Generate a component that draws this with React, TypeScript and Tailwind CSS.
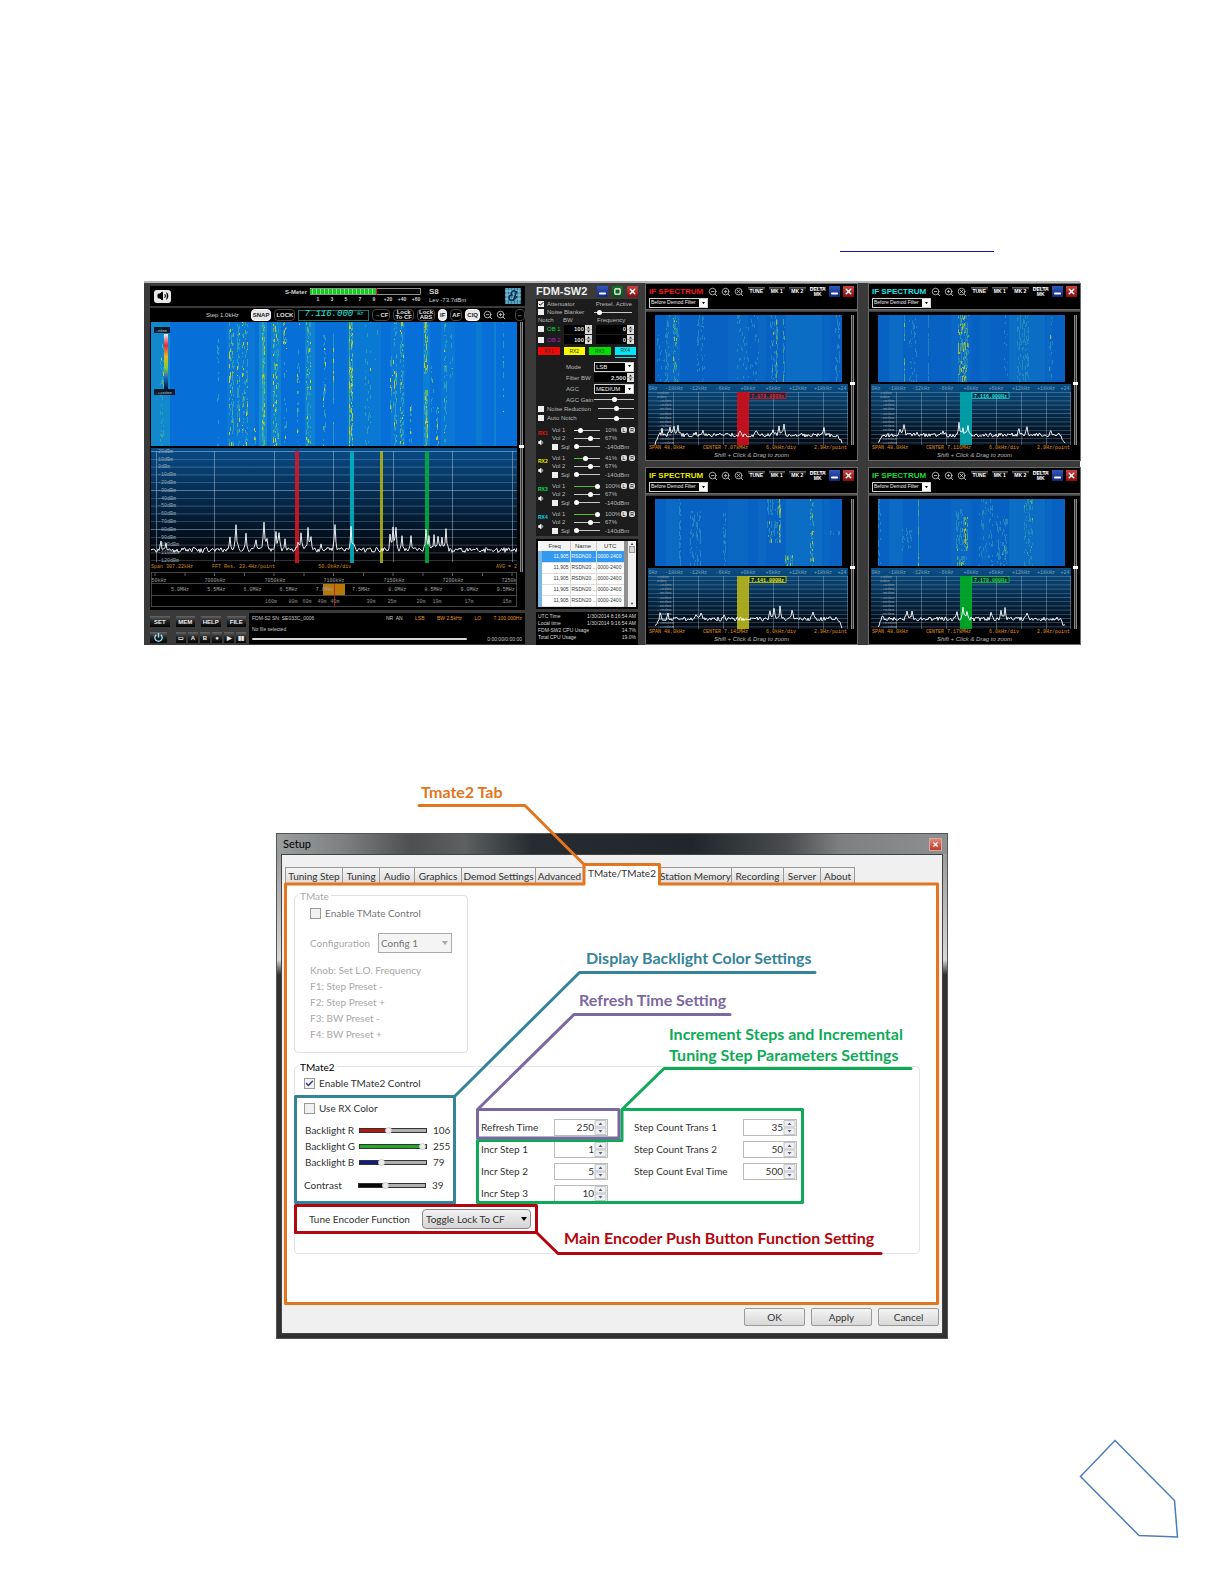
import { ReactNode } from "react"
import { Check, Minus, Search, Square, Volume1, Volume2, X, ZoomIn, ZoomOut } from "lucide-react"

type Streak = { x: number; w: number; d: number; hot?: number; from?: number; to?: number }
type Peak = [number, number]

// small seeded generator, keeps the traces stable between renders
const random = (seed: number) => () => {
  seed = (seed + 0x6d2b79f5) | 0
  let t = Math.imul(seed ^ (seed >>> 15), 1 | seed)
  t = (t + Math.imul(t ^ (t >>> 7), 61 | t)) ^ t
  return ((t ^ (t >>> 14)) >>> 0) / 4294967296
}

const streakPaths = (streaks: Streak[], height: number, seed: number) => {
  const next = random(seed)
  const paths = ["", "", ""]
  streaks.forEach(({ x, w, d, hot = 0.3, from = 0, to = height }) => {
    for (let dx = 0; dx < w; dx += 1) {
      const density = Math.min(1, d * (0.5 + next()))
      const heat = hot * (0.3 + next())
      for (let y = from; y < to; ) {
        const len = Math.min(to - y, 1 + Math.floor(next() * 4))
        if (next() < density) {
          const r = next()
          const tone = r < heat * 0.4 ? 2 : r < heat ? 1 : 0
          paths[tone] += `M${x + dx} ${y}h1v${len}h-1z`
        }
        y += len
      }
    }
  })
  return paths
}

const trace = (width: number, base: number, noise: number, peaks: Peak[], seed: number, from = 0, shoulder = 0) => {
  const next = random(seed)
  let d = ""
  for (let x = from; x <= width; x += 1) {
    let y = base + (next() - 0.5) * noise
    peaks.forEach(([px, h]) => {
      const dist = Math.abs(x - px)
      if (dist < 4) y -= h * Math.exp(-dist * 1.1) * (0.8 + next() * 0.2)
    })
    const edge = Math.min(x - from, width - x)
    if (edge < shoulder) y += (shoulder - edge) * 1.6
    d += `${d ? "L" : "M"}${x} ${y.toFixed(1)}`
  }
  return d
}

const mainStreaks: Streak[] = [
  { x: 9, w: 4, d: 0.25, hot: 0.15 },
  { x: 66, w: 2, d: 0.15, hot: 0 },
  { x: 78, w: 5, d: 0.35, hot: 0.5 },
  { x: 86, w: 3, d: 0.4, hot: 0.3 },
  { x: 91, w: 6, d: 0.3, hot: 0.4 },
  { x: 103, w: 2, d: 0.3, from: 106 },
  { x: 111, w: 3, d: 0.8, hot: 0.6 },
  { x: 122, w: 6, d: 0.4, hot: 0.5 },
  { x: 132, w: 4, d: 0.55, hot: 0.6, to: 22 },
  { x: 133, w: 3, d: 0.15, from: 22 },
  { x: 146, w: 3, d: 0.15 },
  { x: 155, w: 5, d: 0.4, hot: 0.4 },
  { x: 172, w: 3, d: 0.35, hot: 0.4 },
  { x: 182, w: 1, d: 2, hot: 0.4, from: 12, to: 82 },
  { x: 182, w: 1, d: 2, hot: 0.4, from: 100 },
  { x: 198, w: 4, d: 0.7, hot: 0.7 },
  { x: 214, w: 6, d: 0.12, hot: 0.1 },
  { x: 224, w: 3, d: 0.12, hot: 0.1, to: 40 },
  { x: 239, w: 4, d: 0.3, hot: 0.3, from: 34, to: 98 },
  { x: 243, w: 3, d: 0.35, hot: 0.4 },
  { x: 249, w: 4, d: 0.3, hot: 0.3 },
  { x: 257, w: 4, d: 0.2, hot: 0.3, from: 80 },
  { x: 273, w: 4, d: 0.65, hot: 0.6, to: 52 },
  { x: 273, w: 4, d: 0.8, hot: 0.8, from: 68 },
  { x: 280, w: 3, d: 0.2, from: 40, to: 90 },
  { x: 285, w: 3, d: 0.35, hot: 0.5, from: 84 },
  { x: 293, w: 3, d: 0.4, hot: 0.3 },
  { x: 299, w: 3, d: 0.15, to: 60 },
  { x: 352, w: 1, d: 0.4, hot: 0.3, to: 90 },
]

const mainPeaks: Peak[] = [
  [10, 10], [15, 8], [79, 16], [85, 28], [95, 18], [105, 12], [113, 32], [116, 14], [125, 22], [128, 20], [134, 12],
  [147, 10], [150, 18], [157, 26], [160, 12], [170, 8], [184, 28], [200, 24], [203, 8], [239, 14], [242, 26], [245, 24],
  [251, 18], [260, 14], [275, 22], [278, 16], [283, 16], [287, 14], [291, 14], [295, 20],
]

const bands = [
  { x: 144, w: 4, fill: "#e0141e" },
  { x: 199, w: 4, fill: "#00b8c8" },
  { x: 229, w: 3, fill: "#b8b814" },
  { x: 274, w: 4, fill: "#00b43c" },
]

const receivers = [
  { name: "RX1", color: "text-[#f01010]", vol: "10%", v: 20, fill: "#dddddd", vol2: "67%" },
  { name: "RX2", color: "text-[#e8e800]", vol: "41%", v: 41, fill: "#56c02b", vol2: "67%" },
  { name: "RX3", color: "text-[#00e040]", vol: "100%", v: 100, fill: "#56c02b", vol2: "67%" },
  { name: "RX4", color: "text-[#00d8e8]", vol: "100%", v: 100, fill: "#56c02b", vol2: "67%" },
]

const ifWindows = [
  {
    id: "rx1", title: "text-[#f01818]", band: "#c8101c", freq: "7.078.000Hz", center: "CENTER 7.078MHz",
    streaks: [
      { x: 2, w: 8, d: 0.15, hot: 0, from: 20 }, { x: 10, w: 5, d: 0.3, hot: 0.1 }, { x: 18, w: 6, d: 0.5, hot: 0.35 }, { x: 42, w: 8, d: 0.25, hot: 0.05 },
      { x: 82, w: 22, d: 0.1, hot: 0 }, { x: 115, w: 6, d: 0.2, hot: 0.1 }, { x: 121, w: 2, d: 0.8, hot: 0.4 }, { x: 128, w: 2, d: 0.5, hot: 0.3 }, { x: 180, w: 5, d: 0.25, hot: 0 },
    ],
    peaks: [[14, 6], [22, 8], [26, 9], [30, 10], [48, 4], [55, 4], [92, 5], [108, 6], [125, 8], [131, 12], [136, 10], [176, 7]] as Peak[],
  },
  {
    id: "rx4", title: "text-[#28e0e0]", band: "#00a0a8", freq: "7.116.000Hz", center: "CENTER 7.116MHz",
    streaks: [
      { x: 26, w: 1, d: 2, hot: 0.7, to: 26 }, { x: 26, w: 1, d: 2, hot: 0.7, from: 43 }, { x: 31, w: 8, d: 0.15, hot: 0 }, { x: 50, w: 1, d: 0.9, hot: 0 },
      { x: 80, w: 11, d: 0.6, hot: 0.5 }, { x: 126, w: 4, d: 0.2, hot: 0 }, { x: 139, w: 12, d: 0.3, hot: 0 }, { x: 171, w: 5, d: 0.15, hot: 0.1 },
    ],
    peaks: [[33, 14], [29, 6], [46, 5], [72, 4], [88, 14], [92, 8], [97, 9], [148, 6], [156, 9], [180, 6]] as Peak[],
  },
  {
    id: "rx2", title: "text-[#e8e800]", band: "#b0b01c", freq: "7.141.000Hz", center: "CENTER 7.141MHz",
    streaks: [
      { x: 24, w: 2, d: 0.5, hot: 0 }, { x: 35, w: 11, d: 0.25, hot: 0, from: 12 }, { x: 68, w: 3, d: 0.3, hot: 0, from: 14 }, { x: 112, w: 12, d: 0.35, hot: 0.05, to: 16 },
      { x: 112, w: 12, d: 0.4, hot: 0.1, from: 22, to: 44 }, { x: 124, w: 2, d: 0.8, hot: 0.7, to: 44 }, { x: 130, w: 8, d: 0.4, hot: 0.3, from: 56 },
      { x: 155, w: 4, d: 0.35, hot: 0.5 }, { x: 173, w: 12, d: 0.3, hot: 0, from: 32, to: 36 },
    ],
    peaks: [[12, 8], [20, 5], [48, 5], [53, 9], [76, 6], [122, 9], [126, 11], [132, 12], [144, 13], [165, 10]] as Peak[],
  },
  {
    id: "rx3", title: "text-[#20d838]", band: "#00a828", freq: "7.178.000Hz", center: "CENTER 7.178MHz",
    streaks: [
      { x: 0, w: 3, d: 0.4, hot: 0 }, { x: 24, w: 11, d: 0.3, hot: 0.05, from: 26, to: 52 }, { x: 40, w: 1, d: 0.9, hot: 0.4 }, { x: 78, w: 8, d: 0.4, hot: 0.1, from: 10, to: 52 },
      { x: 86, w: 4, d: 0.8, hot: 0.8, from: 18, to: 52 }, { x: 79, w: 10, d: 0.5, hot: 0.4, from: 57 }, { x: 101, w: 14, d: 0.2, hot: 0 }, { x: 118, w: 12, d: 0.25, hot: 0, from: 16 },
      { x: 124, w: 5, d: 0.5, hot: 0.6, from: 46, to: 56 }, { x: 146, w: 9, d: 0.3, hot: 0.1 },
    ],
    peaks: [[11, 7], [36, 9], [41, 10], [86, 7], [92, 12], [96, 8], [120, 6], [130, 9], [134, 12], [156, 8]] as Peak[],
  },
]

const tabs = [
  { name: "Tuning Step", w: "w-[58px]" },
  { name: "Tuning", w: "w-[37px]" },
  { name: "Audio", w: "w-[35px]" },
  { name: "Graphics", w: "w-[47px]" },
  { name: "Demod Settings", w: "w-[74px]" },
  { name: "Advanced", w: "w-[48px]" },
  { name: "TMate/TMate2", w: "w-[76px]" },
  { name: "Station Memory", w: "w-[72px]" },
  { name: "Recording", w: "w-[52px]" },
  { name: "Server", w: "w-[37px]" },
  { name: "About", w: "w-[34px]" },
]

const backlights = [
  { name: "Backlight R", value: 106, max: 255, color: "#b01c10" },
  { name: "Backlight G", value: 255, max: 255, color: "#28a828" },
  { name: "Backlight B", value: 79, max: 255, color: "#101c80" },
]

const fillTo = (color: string, rest: string, pct: number) => ({
  backgroundImage: `linear-gradient(to right, ${color} ${pct}%, ${rest} ${pct}%)`,
})

const Waterfall = ({ width, height, streaks, seed, haze, fill, soft = false }: { width: number; height: number; streaks: Streak[]; seed: number; haze: number[][]; fill: string; soft?: boolean }) => {
  const [cool, green, hot] = streakPaths(streaks, height, seed)
  return (
    <>
      <rect width={width} height={height} fill={fill} />
      {haze.map(([x, w, o]) => (
        <rect key={x} x={x} width={w} height={height} fill="#22a8c0" opacity={o} />
      ))}
      <path d={cool} fill="#38a8b8" opacity={soft ? 0.5 : 0.7} />
      <path d={green} fill="#74bc60" opacity={soft ? 0.7 : 0.85} />
      <path d={hot} fill="#c4cc28" opacity={soft ? 0.8 : 0.95} />
    </>
  )
}

const MiniCheck = ({ label, checked = false, color = "text-[#b8b8b8]" }: { label: string; checked?: boolean; color?: string }) => (
  <label className={`flex items-center gap-[3px] whitespace-nowrap ${color}`}>
    <span className="grid place-items-center">
      <input type="checkbox" defaultChecked={checked} className="col-start-1 row-start-1 size-[6px] appearance-none bg-[#eeeeee]" />
      {checked && <Check className="pointer-events-none col-start-1 row-start-1 size-[6px] text-black" strokeWidth={4} />}
    </span>
    {label}
  </label>
)

const MiniSlider = ({ label, value, fill = "#c8c8c8" }: { label: string; value: number; fill?: string }) => (
  <input
    type="range"
    aria-label={label}
    defaultValue={value}
    style={fillTo(fill, "#c8c8c8", value)}
    className="h-px w-full min-w-0 appearance-none [&::-webkit-slider-thumb]:size-[5px] [&::-webkit-slider-thumb]:appearance-none [&::-webkit-slider-thumb]:rounded-full [&::-webkit-slider-thumb]:bg-white"
  />
)

const MiniNumber = ({ label, value }: { label: string; value: string }) => (
  <span className="flex h-[9px] bg-black">
    <input aria-label={label} defaultValue={value} className="w-full min-w-0 bg-black pr-px text-right font-bold text-[#dddddd]" />
    <span className="flex w-[7px] shrink-0 bg-[#dcdcdc] text-[#222222]">
      <svg viewBox="0 0 7 9" className="h-full w-full">
        <path d="M2 3.5l1.500-2 1.500 2zM2 5.500l1.500 2 1.500-2z" fill="currentColor" />
        <path d="M0 4.500h7" stroke="#888888" strokeWidth="0.5" />
      </svg>
    </span>
  </span>
)

const MiniSelect = ({ label, value }: { label: string; value: string }) => (
  <span className="flex h-[10px] border border-[#d0d0d0] bg-black">
    <select aria-label={label} className="w-full min-w-0 appearance-none bg-black pl-px text-[#f0f0f0]">
      <option>{value}</option>
    </select>
    <span className="grid w-[8px] shrink-0 place-items-center bg-white">
      <svg viewBox="0 0 4 3" className="w-[3px]"><path d="M0 0h4L2 3z" fill="#000000" /></svg>
    </span>
  </span>
)

const Pill = ({ children, lit = false }: { children: ReactNode; lit?: boolean }) => (
  <button
    className={`grid h-[12px] place-items-center rounded-[4px] border px-px text-[6px] leading-[5px] font-bold ${lit ? "border-white bg-[#e8e8e8] text-[#222222]" : "border-[#444444] bg-black text-[#e0e0e0]"}`}
  >
    {children}
  </button>
)

const WindowButton = ({ kind }: { kind: "min" | "max" | "close" }) => (
  <button
    aria-label={kind}
    className={`grid size-[11px] place-items-center text-white ${kind === "close" ? "bg-gradient-to-b from-[#c84040] to-[#8c0808]" : kind === "max" ? "bg-gradient-to-b from-[#187028] to-[#085018]" : "bg-gradient-to-b from-[#3058c0] to-[#102878]"}`}
  >
    {kind === "close" && <X className="size-[9px]" strokeWidth={4} />}
    {kind === "max" && <Square className="size-[7px]" strokeWidth={4} />}
    {kind === "min" && <Minus className="size-[9px] translate-y-[2px]" strokeWidth={5} />}
  </button>
)

const KeyButton = ({ children, label }: { children: ReactNode; label?: string }) => (
  <button
    aria-label={label}
    className="grid h-[11px] w-full place-items-center bg-gradient-to-b from-[#666666] via-[#222222] to-[#050505] text-[6px] leading-none font-bold text-[#e8e8e8]"
  >
    {children}
  </button>
)

const ScrollRail = ({ thumb, length }: { thumb: string; length: string }) => (
  <div className={`relative flex justify-center bg-black ${length}`}>
    <div className="w-[3px] border-x border-[#888888] bg-[#333333]"></div>
    <div className={`absolute h-[3px] w-[5px] bg-white ${thumb}`}></div>
  </div>
)

const Receiver = () => (
  <div className="flex min-w-0 flex-col pt-[3px] pr-[3px]">
    <div className="flex h-[20px] items-center bg-black px-1 text-[6px] font-bold text-[#d0d0d0]">
      <button aria-label="Mute" className="grid h-[13px] w-[17px] place-items-center rounded-[3px] bg-[#e8e8e8] text-black">
        <Volume2 className="size-[12px]" fill="currentColor" />
      </button>
      <span className="ml-auto self-start pt-[2px]">S-Meter</span>
      <svg viewBox="0 0 115 18" className="ml-[3px] w-[115px]">
        <rect x="0.500" y="1.500" width="110" height="6" fill="#080808" stroke="#cccccc" strokeWidth="0.7" />
        <rect y="2" width="66" height="5" fill="#18c828" />
        {Array.from({ length: 16 }, (_, i) => (
          <rect key={i} x={i * 4 + 2} y="2" width="1" height="5" fill="#70f070" />
        ))}
        <rect x="66" y="1" width="1" height="7" fill="#e02020" />
        {["1", "3", "5", "7", "9", "+20", "+40", "+60"].map((n, i) => (
          <text key={n} x={8 + i * 14} y="14" textAnchor="middle" fontSize="5" fill="#d0d0d0">{n}</text>
        ))}
      </svg>
      <div className="ml-1 w-[76px] leading-[8px]">
        <p className="text-[8px]">S8</p>
        <p className="font-normal">Lev -73.7dBm</p>
      </div>
      <svg viewBox="0 0 16 16" className="size-[16px]">
        <rect width="16" height="16" fill="#2c7ca0" />
        <path d="M2 0v16M5 0v16M8 0v16M11 0v16M14 0v16M0 3h16M0 7h16M0 11h16" stroke="#a0d8e8" strokeWidth="0.8" />
        <path d="M11 4c-3-3-6 1-4 3-4 0-4 6 0 5 2 0 4-2 5-4M12 3l-4 10" fill="none" stroke="#082848" strokeWidth="1.400" />
      </svg>
    </div>
    <div className="mt-[2px] flex h-[14px] items-center justify-end gap-[3px] bg-black text-[6px] text-[#d0d0d0]">
      <span className="mr-[9px]">Step 1.0kHz</span>
      <Pill lit>SNAP</Pill>
      <Pill>LOCK</Pill>
      <div className="flex h-[11px] w-[71px] items-center justify-center gap-1 border border-[#107878] font-mono text-[9px] text-[#28e8d8] italic">
        7.116.000<span className="text-[5px]">Hz</span>
      </div>
      <Pill>→CF</Pill>
      <Pill>Lock<br />To CF</Pill>
      <Pill>Lock<br />ABS</Pill>
      <Pill lit>IF</Pill>
      <Pill>AF</Pill>
      <Pill lit>CIQ</Pill>
      <button aria-label="Zoom out"><ZoomOut className="size-[10px]" /></button>
      <button aria-label="Zoom in"><ZoomIn className="size-[10px]" /></button>
      <span className="w-[3px]"></span>
      <Pill>←</Pill>
    </div>
    <div className="grid grid-cols-[minmax(0,1fr)_8px] bg-black pl-px">
      <div>
        <svg viewBox="0 0 366 126" className="block w-full">
          <Waterfall
            width={366} height={124} streaks={mainStreaks} seed={7} fill="#0670d8"
            haze={[[0, 19, 0.45], [76, 28, 0.15], [108, 8, 0.5], [120, 10, 0.3], [154, 10, 0.3], [196, 34, 0.18], [240, 14, 0.15], [272, 7, 0.25], [290, 14, 0.15], [325, 6, 0.2], [343, 2, 0.3]]}
          />
          <rect x="13" y="12" width="4" height="56" fill="url(#scale)" />
          <rect x="3" y="5" width="16" height="6" fill="#061828" />
          <rect x="3" y="67" width="21" height="6" fill="#061828" />
          <g fontSize="4" fill="#a0b8c8" className="font-mono">
            <text x="4" y="9.500">-0dBm</text>
            <text x="4" y="71.500">-140dBm</text>
          </g>
          <defs>
            <linearGradient id="scale" x1="0" y1="0" x2="0" y2="1">
              <stop offset="0" stopColor="#f0f0f0" /><stop offset="0.2" stopColor="#e02848" /><stop offset="0.4" stopColor="#e8b820" />
              <stop offset="0.6" stopColor="#88c840" /><stop offset="0.8" stopColor="#1060c0" /><stop offset="1" stopColor="#04102c" />
            </linearGradient>
          </defs>
        </svg>
        <svg viewBox="0 0 366 115" className="block w-full overflow-visible">
          <defs>
            <linearGradient id="depth" x1="0" y1="0" x2="0" y2="1">
              <stop offset="0" stopColor="#084c88" /><stop offset="0.85" stopColor="#020a14" /><stop offset="1" stopColor="#000000" />
            </linearGradient>
          </defs>
          <rect width="366" height="115" fill="url(#depth)" />
          {Array.from({ length: 15 }, (_, i) => (
            <g key={i}>
              <path d={`M0 ${3.5 + i * 7.8}H366`} stroke="#b8c8d8" strokeWidth="0.6" opacity={i % 5 === 0 ? 0.8 : 0.5} />
              <text x="7" y={4.8 + i * 7.8} fontSize="5" fill="#90a8b8" className="font-mono">{20 - i * 10}dBm</text>
            </g>
          ))}
          {[5, 63, 123, 182, 242, 301, 361].map((x) => (
            <path key={x} d={`M${x}.5 3V114`} stroke="#b8c8d8" strokeWidth="0.8" opacity="0.6" />
          ))}
          {bands.map((b) => (
            <rect key={b.x} x={b.x} y="3" width={b.w} height="112" fill={b.fill} opacity="0.85" />
          ))}
          <path d={trace(366, 102, 5, mainPeaks, 21)} fill="none" stroke="#ffffff" strokeWidth="0.9" />
        </svg>
        <div className="flex h-[8px] items-center font-mono text-[5px] leading-none text-[#d08c20]">
          <span className="w-1/6">Span 307.22kHz</span>
          <span className="w-[29%]">FFT Res. 23.4Hz/point</span>
          <span className="grow">50.0kHz/div</span>
          <span>AVG = 2</span>
        </div>
        <svg viewBox="0 0 366 39" className="block w-full font-mono">
          <path d="M0 1.500h366M0 12.500h366M0 24.500h366M0 35.500h366M0.500 1v35M365.500 1v35" stroke="#606060" strokeWidth="0.7" />
          <rect x="172" y="13" width="22" height="11" fill="#b87808" />
          {["50kHz", "7000kHz", "7050kHz", "7100kHz", "7150kHz", "7200kHz", "7250k"].map((t, i) => (
            <g key={t}>
              <text x={[8, 64, 124, 183, 243, 302, 358][i]} y="11" textAnchor="middle" fontSize="5" fill="#a0a0a0">{t}</text>
              <path d={`M${4 + i * 59.5} 2v3M${34 + i * 59.5} 2v3`} stroke="#888888" strokeWidth="0.7" />
            </g>
          ))}
          {["5.0", "5.5", "6.0", "6.5", "7.0", "7.5", "8.0", "8.5", "9.0", "9.5"].map((t, i) => (
            <text key={t} x={29 + i * 36.2} y="20" textAnchor="middle" fontSize="5" fill="#a0a0a0">{t}MHz</text>
          ))}
          {["160m", "80m", "60m", "49m", "40m", "30m", "25m", "20m", "19m", "17m", "15m"].map((t, i) => (
            <text key={t} x={[120, 142, 156, 171, 184, 220, 241, 270, 286, 318, 356][i]} y="32" textAnchor="middle" fontSize="5" fill="#909090">{t}</text>
          ))}
          <path d="M183.500 13v23" stroke="#c02010" strokeWidth="0.8" />
        </svg>
      </div>
      <ScrollRail thumb="top-[123px]" length="h-[250px]" />
    </div>
    <div className="mt-[3px] grid grid-cols-[96px_minmax(0,1fr)] gap-[3px]">
      <div className="pt-[3px]">
        <div className="grid grid-cols-4 gap-[6px]">
          <KeyButton>SET</KeyButton>
          <KeyButton>MEM</KeyButton>
          <KeyButton>HELP</KeyButton>
          <KeyButton>FILE</KeyButton>
        </div>
        <div className="mt-[5px] grid grid-cols-[17px_minmax(0,1fr)] gap-[9px]">
          <KeyButton label="Power">
            <svg viewBox="0 0 12 12" className="size-[11px]" fill="none" stroke="#90e0f8" strokeWidth="1.500">
              <path d="M3.500 3a4 4 0 105 0M6 1v5" />
            </svg>
          </KeyButton>
          <div className="grid grid-cols-6 gap-[2px]">
            <KeyButton label="Open">▭</KeyButton>
            <KeyButton>A</KeyButton>
            <KeyButton>B</KeyButton>
            <KeyButton label="Record">●</KeyButton>
            <KeyButton label="Play">▶</KeyButton>
            <KeyButton label="Pause">▮▮</KeyButton>
          </div>
        </div>
      </div>
      <div className="flex h-[31px] flex-col justify-between bg-black px-[3px] py-px text-[5px] leading-[8px] text-[#c8c8c8]">
        <div className="flex justify-between">
          <span className="w-[45%]">FDM-S2 SN: SE033C_0006</span>
          <span>NR&nbsp; AN</span>
          <span className="text-[#e09820]">LSB</span>
          <span className="text-[#e09820]">BW 2.5kHz</span>
          <span className="text-[#e09820]">LO</span>
          <span className="text-[#e09820]">7.100,000Hz</span>
        </div>
        <p>No file selected</p>
        <div className="flex items-center gap-5">
          <div className="h-[2px] grow rounded bg-[#d8d8d8]"></div>
          <span>0:00:00/0:00:00</span>
        </div>
      </div>
    </div>
  </div>
)

const ControlPanel = () => (
  <div className="flex min-w-0 flex-col text-[6px] leading-none text-[#b8b8b8]">
    <div className="flex h-[16px] items-center gap-[4px]">
      <h2 className="grow text-[11px] font-bold text-[#f0f0f0]">FDM-SW2</h2>
      <WindowButton kind="min" />
      <WindowButton kind="max" />
      <WindowButton kind="close" />
    </div>
    <div className="h-[237px] bg-[#1c1c1c] px-[2px] pt-px">
      <div className="flex h-[8px] items-center justify-between pr-1">
        <MiniCheck label="Attenuator" checked />
        <span>Presel. Active</span>
      </div>
      <div className="flex h-[8px] items-center justify-between pr-1">
        <MiniCheck label="Noise Blanker" />
        <div className="flex w-[38px]"><MiniSlider label="Preselector" value={10} /></div>
      </div>
      <div className="flex h-[8px] items-center">
        <span className="w-[25px]">Notch</span>
        <span className="w-[34px]">BW</span>
        <span>Frequency</span>
      </div>
      <div className="grid h-[10px] grid-cols-[22px_28px_1fr] items-center gap-x-[4px] pr-[2px]">
        <MiniCheck label="OB 1" color="text-[#00d840]" />
        <MiniNumber label="Notch 1 bandwidth" value="100" />
        <MiniNumber label="Notch 1 frequency" value="0" />
      </div>
      <div className="grid h-[11px] grid-cols-[22px_28px_1fr] items-center gap-x-[4px] pr-[2px]">
        <MiniCheck label="OB 2" color="text-[#b820c0]" />
        <MiniNumber label="Notch 2 bandwidth" value="100" />
        <MiniNumber label="Notch 2 frequency" value="0" />
      </div>
      <div className="mt-[2px] grid h-[11px] grid-cols-4 gap-[4px] text-[5px] text-[#333333]">
        <button className="h-[8px] bg-[#f00808]">RX1</button>
        <button className="h-[8px] bg-[#f8f800]">RX2</button>
        <button className="h-[8px] bg-[#00e000]">RX3</button>
        <button className="flex h-[11px] flex-col justify-between">
          <span className="h-[8px] w-full bg-[#00e8f8] pt-px">RX4</span>
          <span className="h-px w-full bg-[#00e8f8]"></span>
        </button>
      </div>
      <div className="mt-[3px] grid h-[43px] grid-cols-[56px_1fr] grid-rows-[11px_11px_12px_9px] items-center pr-[2px]">
        <span className="pl-[28px]">Mode</span>
        <MiniSelect label="Mode" value="LSB" />
        <span className="pl-[28px]">Filter BW</span>
        <MiniNumber label="Filter bandwidth" value="2,500" />
        <span className="pl-[28px]">AGC</span>
        <MiniSelect label="AGC" value="MEDIUM" />
        <span className="pl-[28px]">AGC Gain</span>
        <MiniSlider label="AGC gain" value={50} />
      </div>
      <div className="grid h-[19px] grid-cols-[60px_1fr] items-center pr-[2px]">
        <MiniCheck label="Noise Reduction" />
        <MiniSlider label="Noise reduction" value={50} />
        <MiniCheck label="Auto Notch" />
        <MiniSlider label="Auto notch" value={50} />
      </div>
      {receivers.map((r) => (
        <div key={r.name} className="mt-[3px] grid h-[25px] grid-cols-[12px_20px_26px_1fr] grid-rows-[8px_8px_9px] items-center gap-x-[2px]">
          <div className={`row-span-3 ${r.color}`}>
            <p className="text-[5px] font-bold">{r.name}</p>
            <Volume1 className="mt-[3px] size-[7px] text-white" fill="currentColor" />
          </div>
          <span>Vol 1</span>
          <MiniSlider label={`${r.name} volume 1`} value={r.v} fill={r.fill} />
          <div className="flex items-center justify-between pr-px pl-[3px]">
            <span>{r.vol}</span>
            <span className="flex gap-[2px] text-[5px] text-black">
              <button className="size-[6px] rounded-[2px] bg-[#d8d8d8]">L</button>
              <button className="size-[6px] rounded-[2px] bg-[#d8d8d8]">R</button>
            </span>
          </div>
          <span>Vol 2</span>
          <MiniSlider label={`${r.name} volume 2`} value={66} />
          <span className="pl-[3px]">{r.vol2}</span>
          <MiniCheck label="Sql" />
          <MiniSlider label={`${r.name} squelch`} value={2} />
          <span className="pl-[3px]">-140dBm</span>
        </div>
      ))}
    </div>
    <div className="mt-[3px] flex h-[70px] items-start bg-black p-[2px]">
      <table className="h-[66px] w-full table-fixed border-collapse bg-white text-[5px] text-[#333333]">
        <thead>
          <tr className="h-[10px] bg-[#f4f4f4] text-[6px]">
            <th className="w-[30px] border-r border-[#cccccc] font-normal">Freq</th>
            <th className="border-r border-[#cccccc] font-normal">Name</th>
            <th className="w-[28px] font-normal">UTC</th>
          </tr>
        </thead>
        <tbody>
          {[0, 1, 2, 3, 4].map((n) => (
            <tr key={n} className={`h-[11px] ${n === 0 ? "bg-[#3399f0] text-white" : ""}`}>
              <td className="border-r border-b border-l-4 border-[#dddddd] border-l-[#78b8e0] pr-px text-right">11,905</td>
              <td className="border-r border-b border-[#dddddd] pl-px whitespace-nowrap">RSDN20 ...</td>
              <td className="border-b border-[#dddddd] pl-px whitespace-nowrap">0000-2400</td>
            </tr>
          ))}
        </tbody>
      </table>
      <div className="h-[66px] w-[4px] shrink-0 bg-[#909090]"></div>
      <div className="flex h-[66px] w-[8px] shrink-0 flex-col items-center justify-between bg-[#f0f0f0] py-px text-[4px] text-[#333333]">
        <span>▲</span>
        <span className="mb-auto h-[7px] w-[6px] border border-[#999999] bg-[#d8d8d8]"></span>
        <span>▼</span>
      </div>
    </div>
    <div className="mt-[3px] grow bg-black px-[2px] py-px text-[5px] leading-[7px] text-[#d8d8d8]">
      <p className="flex justify-between"><span>UTC Time</span><span>1/30/2014 8:16:54 AM</span></p>
      <p className="flex justify-between"><span>Local time</span><span>1/30/2014 9:16:54 AM</span></p>
      <p className="flex justify-between"><span>FDM-SW2 CPU Usage</span><span>14.7%</span></p>
      <p className="flex justify-between"><span>Total CPU Usage</span><span>19.0%</span></p>
    </div>
  </div>
)

const SpectrumWindow = ({ win, seed }: { win: (typeof ifWindows)[number]; seed: number }) => (
  <section className="flex min-w-0 flex-col bg-black outline outline-[#6a6a6a]">
    <div className="h-[25px] px-[3px] pt-px">
      <div className="flex h-[13px] items-center gap-[3px] text-[#c8c8c8]">
        <h3 className={`w-[56px] text-[8px] font-bold whitespace-nowrap ${win.title}`}>IF SPECTRUM</h3>
        <button aria-label="Zoom out"><ZoomOut className="size-[10px]" /></button>
        <button aria-label="Zoom in"><ZoomIn className="size-[10px]" /></button>
        <button aria-label="Reset zoom" className="relative">
          <Search className="size-[10px]" />
          <X className="absolute top-[2px] left-[2px] size-[5px]" strokeWidth={4} />
        </button>
        <div className="ml-auto grid w-[78px] shrink-0 grid-cols-4 gap-[4px]">
          {["TUNE", "MK 1", "MK 2", "DELTA MK"].map((name) => (
            <button
              key={name}
              className="grid h-[10px] place-items-center bg-gradient-to-b from-[#777777] to-[#000000] to-40% text-[5px] leading-[5px] font-bold text-white"
            >
              {name}
            </button>
          ))}
        </div>
        <WindowButton kind="min" />
        <WindowButton kind="close" />
      </div>
      <div className="w-[59px] text-[5px]">
        <MiniSelect label="Filter stage" value="Before Demod Filter" />
      </div>
    </div>
    <div className="h-[3px] bg-gradient-to-b from-[#777777] to-[#333333]"></div>
    <div className="grid grid-cols-[minmax(0,1fr)_9px] pt-[3px] pl-[2px]">
      <svg viewBox="0 0 200 130" className="block w-full font-mono">
        <g transform="translate(7 0)">
          <Waterfall soft width={187} height={67} streaks={win.streaks} seed={seed} fill="#0862c4" haze={[[11, 14, 0.12], [73, 20, 0.08], [103, 8, 0.08], [131, 36, 0.16], [169, 5, 0.08]]} />
        </g>
        <linearGradient id={`depth-${win.id}`} x1="0" y1="0" x2="0" y2="1">
          <stop offset="0" stopColor="#0a5088" /><stop offset="0.9" stopColor="#020c18" />
        </linearGradient>
        <rect y="69" width="200" height="61" fill={`url(#depth-${win.id})`} />
        {["0Hz", "-18kHz", "-12kHz", "-6kHz", "+0kHz", "+6kHz", "+12kHz", "+18kHz", "+24"].map((t, i) => (
          <text key={t} x={[5, 26, 50, 75, 100, 125, 150, 175, 194][i]} y="75" textAnchor="middle" fontSize="5" fill="#78a0b8">{t}</text>
        ))}
        {Array.from({ length: 13 }, (_, i) => (
          <g key={i}>
            <path d={`M0 ${77.5 + i * 4.2}H200`} stroke="#b0c8d8" strokeWidth="0.5" opacity="0.6" />
            <text x="9" y={78.5 + i * 4.2} fontSize="4" fill="#8098a8">{10 - i * 10}dBm</text>
          </g>
        ))}
        {[25, 50, 75, 100, 125, 150, 175, 199].map((x) => (
          <path key={x} d={`M${x}.5 77V130`} stroke="#b0c8d8" strokeWidth="0.7" opacity="0.5" />
        ))}
        <rect x="89" y="77" width="12" height="53" fill={win.band} opacity="0.95" />
        <g className={win.title}>
          <rect x="101" y="77.5" width="37" height="6" fill="#082030" fillOpacity="0.6" stroke="currentColor" strokeWidth="0.7" />
          <text x="103" y="82.500" fontSize="5" fontWeight="bold" fill="currentColor">{win.freq}</text>
        </g>
        <path d={trace(194, 120, 4, win.peaks, seed + 3, 7, 5)} fill="none" stroke="#ffffff" strokeWidth="0.9" />
      </svg>
      <ScrollRail thumb="top-[67px]" length="h-full" />
    </div>
    <div className="flex h-[6px] items-center justify-between pr-[10px] pl-[3px] font-mono text-[5px] leading-none whitespace-nowrap text-[#e09018]">
      <span>SPAN 48.0kHz</span>
      <span>{win.center}</span>
      <span>6.0kHz/div</span>
      <span>2.9Hz/point</span>
    </div>
    <p className="h-[9px] text-center text-[6px] leading-[9px] text-[#b8b8b8] italic">Shift + Click &amp; Drag to zoom</p>
  </section>
)

const SetupCheck = ({ label, checked = false, disabled = false }: { label: string; checked?: boolean; disabled?: boolean }) => (
  <label className="flex items-center gap-1">
    <span className="grid place-items-center">
      <input
        type="checkbox"
        defaultChecked={checked}
        disabled={disabled}
        className="col-start-1 row-start-1 size-[11px] appearance-none border border-[#999999] bg-[#f2f2f2]"
      />
      {checked && <Check className="pointer-events-none col-start-1 row-start-1 size-[9px] text-[#33448c]" strokeWidth={4} />}
    </span>
    {label}
  </label>
)

const SetupSlider = ({ name, value, max, color }: { name: string; value: number; max: number; color: string }) => (
  <label className="flex h-4 items-center">
    <span className="w-[54px]">{name}</span>
    <input
      type="range"
      max={max}
      defaultValue={value}
      style={fillTo(color, "#b0b0b0", (value / max) * 100)}
      className="h-[5px] w-[68px] appearance-none border border-[#333333] [&::-webkit-slider-thumb]:size-[7px] [&::-webkit-slider-thumb]:appearance-none [&::-webkit-slider-thumb]:rounded-full [&::-webkit-slider-thumb]:border [&::-webkit-slider-thumb]:border-[#cccccc] [&::-webkit-slider-thumb]:bg-[#eeeeee]"
    />
    <output className="ml-[6px]">{value}</output>
  </label>
)

const SetupNumber = ({ name, value, label }: { name: string; value: number; label: string }) => (
  <label className="flex h-[22px] items-center">
    <span className={label}>{name}</span>
    <span className="flex h-[17px] w-[54px] items-center border border-[#bbbbbb] bg-white">
      <input type="number" defaultValue={value} className="w-full min-w-0 [appearance:textfield] text-right [&::-webkit-inner-spin-button]:appearance-none" />
      <svg viewBox="0 0 13 15" className="h-[15px] w-[13px] shrink-0">
        <path d="M1 .5h11v6.500H1zM1 8h11v6.500H1z" fill="#f0f0f0" stroke="#c4c4c4" />
        <path d="M4.500 5l2-2.500 2 2.500zM4.500 10l2 2.500 2-2.500z" fill="#5060a0" />
      </svg>
    </span>
  </label>
)

const SetupDialog = () => (
  <div className="border border-[#555555] bg-gradient-to-b from-[#909090] via-[#d8d8d8] via-25% to-[#303030] to-28% px-1 pb-1 font-[Lato,sans-serif] text-[10px] leading-4 text-[#333333]">
    <div className="-mx-1 flex h-[20px] items-center justify-between bg-[linear-gradient(to_right,#9a9e9e_0%,#7c8080_10%,#4c5050_20%,#5c6060_28%,#262c30_38%,#20262a_62%,#484c4e_76%,#7c8080_84%,#8c9090_100%)] pr-[5px] pl-[6px]">
      <h2 className="text-[11px] text-black">Setup</h2>
      <button aria-label="Close" className="grid h-[13px] w-[13px] place-items-center border border-[#dba8a0] bg-gradient-to-b from-[#e08878] to-[#c03828] text-white">
        <X className="size-[7px]" strokeWidth={4} />
      </button>
    </div>
    <div className="border border-[#444444] bg-[#f0f0f0] pb-[7px]">
      <div className="flex items-end px-[3px] pt-[9px]">
        {tabs.map((t) => (
          <button
            key={t.name}
            className={`whitespace-nowrap ${t.w} ${t.name === "TMate/TMate2" ? "h-[20px] bg-white pb-[2px]" : "h-[17px] border-t border-r border-[#999999] bg-gradient-to-b from-[#f4f4f4] to-[#dcdcdc] first:border-l"}`}
          >
            {t.name}
          </button>
        ))}
      </div>
      <div className="mx-[3px] h-[420px] bg-white px-[9px] pt-[11px]">
        <fieldset disabled className="h-[158px] w-[174px] rounded-sm border border-[#e0e0e0] px-[15px] text-[#a8a8a8]">
          <legend className="-ml-[12px] h-0 px-[2px] leading-[0px]">TMate</legend>
          <div className="pt-[9px] text-[#777777]"><SetupCheck label="Enable TMate Control" disabled /></div>
          <div className="mt-3 flex h-[19px] items-center justify-between">
            <label htmlFor="config">Configuration</label>
            <span className="relative">
              <select id="config" disabled className="h-[20px] w-[74px] appearance-none border border-[#aaaaaa] bg-[#f4f4f4] pl-[2px] text-[#777777]">
                <option>Config 1</option>
              </select>
              <svg viewBox="0 0 6 4" className="absolute top-2 right-1 w-[6px]"><path d="M0 0h6L3 4z" fill="#aaaaaa" /></svg>
            </span>
          </div>
          <ul className="mt-[10px]">
            <li>Knob: Set L.O. Frequency</li>
            <li>F1: Step Preset -</li>
            <li>F2: Step Preset +</li>
            <li>F3: BW Preset -</li>
            <li>F4: BW Preset +</li>
          </ul>
        </fieldset>
        <fieldset className="mt-[13px] mr-[10px] h-[188px] rounded-sm border border-[#e4e4e4] px-[9px]">
          <legend className="-ml-[6px] h-0 px-[2px] leading-[0px] text-black">TMate2</legend>
          <div className="flex pt-[8px]">
            <div className="w-[177px]">
              <SetupCheck label="Enable TMate2 Control" checked />
              <div className="mt-[9px]"><SetupCheck label="Use RX Color" /></div>
              <div className="mt-[6px] pl-px">
                {backlights.map((b) => (
                  <SetupSlider key={b.name} {...b} />
                ))}
              </div>
              <div className="mt-[7px]"><SetupSlider name="Contrast" value={39} max={100} color="#080808" /></div>
            </div>
            <div className="w-[153px] pt-[41px]">
              <SetupNumber name="Refresh Time" value={250} label="w-[73px]" />
              <SetupNumber name="Incr Step 1" value={1} label="w-[73px]" />
              <SetupNumber name="Incr Step 2" value={5} label="w-[73px]" />
              <SetupNumber name="Incr Step 3" value={10} label="w-[73px]" />
            </div>
            <div className="pt-[41px]">
              <SetupNumber name="Step Count Trans 1" value={35} label="w-[109px]" />
              <SetupNumber name="Step Count Trans 2" value={50} label="w-[109px]" />
              <SetupNumber name="Step Count Eval Time" value={500} label="w-[109px]" />
            </div>
          </div>
          <div className="mt-[5px] flex items-center pl-[5px]">
            <label htmlFor="encoder" className="w-[113px]">Tune Encoder Function</label>
            <span className="relative">
              <select id="encoder" className="h-[20px] w-[109px] appearance-none rounded-sm border border-[#888888] bg-gradient-to-b from-[#f2f2f2] to-[#d4d4d4] pl-[3px]">
                <option>Toggle Lock To CF</option>
              </select>
              <svg viewBox="0 0 6 4" className="absolute top-2 right-1 w-[6px]"><path d="M0 0h6L3 4z" fill="#000000" /></svg>
            </span>
          </div>
        </fieldset>
      </div>
      <div className="mt-[4px] flex justify-end gap-[6px] pr-[3px]">
        {["OK", "Apply", "Cancel"].map((name) => (
          <button key={name} className="h-[18px] w-[61px] rounded-xs border border-[#999999] bg-gradient-to-b from-[#f4f4f4] to-[#d8d8d8]">
            {name}
          </button>
        ))}
      </div>
    </div>
  </div>
)

// outlines and leader lines that point at the groups of the dialog
const Callouts = () => (
  <div className="pointer-events-none absolute inset-0 font-[Lato,sans-serif] text-[16px] leading-[21px] font-bold whitespace-nowrap">
    <svg viewBox="0 0 672 561" className="absolute inset-0 w-full" fill="none" strokeWidth="3" strokeLinejoin="round" strokeLinecap="round">
      <path d="M143 27.500H249L308 86.500H383.500V106H661.500V525.500H9.500V106H308V86.500" stroke="#e3751c" />
      <path d="M178.500 318.500H19.500V424.500H178.500ZL303.500 194.500H539" stroke="#35849a" />
      <path d="M178.500 318.500V424.500" stroke="#35849a" />
      <path d="M526.500 331.500H346V362.500H201.500V424.500H526.500ZM346 331.500L388 290.500H635" stroke="#0dab58" />
      <path d="M201.500 331.500H343V360H201.500ZL298 236.500H454" stroke="#7c68a0" />
      <path d="M19.500 427.500H260.500V454.500H19.500ZM260.500 454.500L282 475.500H605" stroke="#b4060e" />
    </svg>
    <p className="absolute top-[3px] left-[145px] text-[#e3751c]">Tmate2 Tab</p>
    <p className="absolute top-[169px] left-[310px] text-[#35849a]">Display Backlight Color Settings</p>
    <p className="absolute top-[211px] left-[303px] text-[#7c68a0]">Refresh Time Setting</p>
    <p className="absolute top-[245px] left-[393px] text-[#0dab58]">Increment Steps and Incremental<br />Tuning Step Parameters Settings</p>
    <p className="absolute top-[449px] left-[288px] text-[#b4060e]">Main Encoder Push Button Function Setting</p>
  </div>
)

export default function App() {
  return (
    <main className="bg-white pb-[45px] font-['Liberation_Sans',sans-serif]">
      <div className="flex justify-end px-36 pt-[240px]">
        <a href="#manual" aria-label="Manual" className="mr-[86px] h-3 w-[154px] border-b border-[#1414a0]"></a>
      </div>
      <div className="mx-36 mt-[29px] grid h-[364px] grid-cols-[minmax(0,378fr)_minmax(0,102fr)_minmax(0,434fr)] gap-x-2 border-t-2 border-[#b8b8b8] bg-[#3a3a3a] pl-[6px]">
        <Receiver />
        <ControlPanel />
        <div className="grid grid-cols-2 content-start gap-x-3 gap-y-2 pt-px">
          {ifWindows.map((win, i) => (
            <SpectrumWindow key={win.id} win={win} seed={40 + i * 11} />
          ))}
        </div>
      </div>
      <div className="relative mx-auto mt-[133px] w-[672px] pt-[55px]">
        <SetupDialog />
        <Callouts />
      </div>
      <div className="mt-[100px] flex justify-end pr-[45px]">
        <svg viewBox="0 0 100 100" className="size-[100px]">
          <path d="M36 1.500L95.500 61.500L98.500 98L60 96.500L1.500 37.500Z" fill="none" stroke="#4a7ebb" strokeWidth="1.500" />
        </svg>
      </div>
    </main>
  )
}
